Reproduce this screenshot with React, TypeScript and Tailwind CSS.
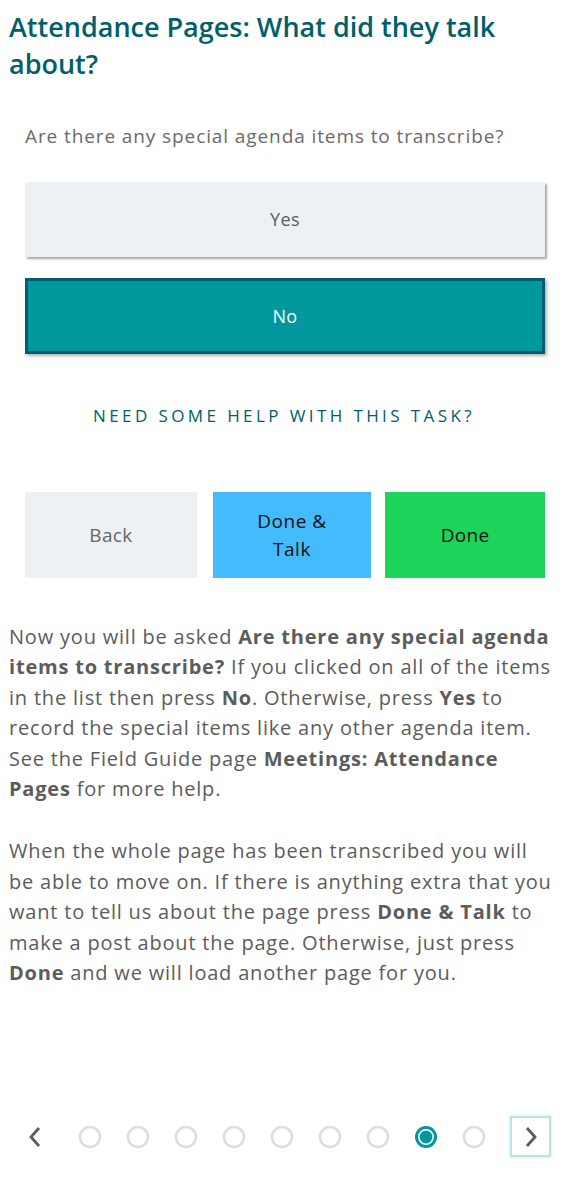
import React from "react";

const font = { fontFamily: '"Open Sans", "Noto Sans", Arial, sans-serif' };

function Dot({ active }: { active?: boolean }) {
  if (active) {
    return (
      <svg width="24" height="24" viewBox="0 0 24 24" className="shrink-0">
        <circle cx="12" cy="12" r="11" fill="#00979d" />
        <circle cx="12" cy="12" r="7.2" fill="#00979d" stroke="#ffffff" strokeWidth="1.6" />
      </svg>
    );
  }
  return (
    <svg width="24" height="24" viewBox="0 0 24 24" className="shrink-0">
      <circle cx="12" cy="12" r="10" fill="none" stroke="#dedede" strokeWidth="2.6" />
    </svg>
  );
}

export default function App() {
  return (
    <div
      className="flex min-h-[1178px] w-[568px] flex-col bg-white text-[#5c5c5c]"
      style={font}
    >
      <h1 className="px-[9px] pt-[8px] text-[27px] font-semibold leading-[37px] tracking-[0px] text-[#005f6b]">
        Attendance Pages: What did they talk about?
      </h1>

      <p className="mt-[42px] px-[25px] text-[19px] leading-[24px] tracking-[0.9px] text-[#6a6a6a]">
        Are there any special agenda items to transcribe?
      </p>

      <div className="mt-[34px] flex flex-col gap-[21px] px-[25px]">
        <button className="h-[75px] w-[520px] bg-[#eef1f4] text-[18px] tracking-[0.4px] text-[#5c5c5c] shadow-[2px_2px_2px_rgba(0,0,0,0.35)]">
          Yes
        </button>
        <button className="h-[76px] w-[520px] border-[3px] border-[#005f6b] bg-[#00979d] text-[18px] tracking-[0.4px] text-white shadow-[2px_2px_3px_rgba(0,0,0,0.3)]">
          No
        </button>
      </div>

      <div className="mt-[50px] text-center text-[17px] uppercase leading-[24px] tracking-[3.4px] text-[#005f6b]">
        Need some help with this task?
      </div>

      <div className="mt-[64px] flex px-[25px]">
        <button className="h-[86px] w-[172px] shrink-0 bg-[#eef1f4] text-[19px] tracking-[0.4px] text-[#666666]">
          Back
        </button>
        <button className="ml-[16px] h-[86px] w-[158px] shrink-0 bg-[#43bbfd] px-4 text-[19px] leading-[28px] tracking-[0.5px] text-[#111111]">
          Done &amp;
          <br />
          Talk
        </button>
        <button className="ml-[14px] h-[86px] w-[160px] shrink-0 bg-[#1ed359] text-[19px] tracking-[0.3px] text-[#111111]">
          Done
        </button>
      </div>

      <div className="mt-[44px] pl-[9px] text-[20px] leading-[30.4px] tracking-[0.8px] text-[#5c5c5c]">
        <p>
          Now you will be asked <b className="font-bold">Are there any special agenda</b>
          <br />
          <b className="font-bold">items to transcribe?</b> If you clicked on all of the items
          <br />
          in the list then press <b className="font-bold">No</b>. Otherwise, press <b className="font-bold">Yes</b> to
          <br />
          record the special items like any other agenda item.
          <br />
          See the Field Guide page <b className="font-bold">Meetings: Attendance</b>
          <br />
          <b className="font-bold">Pages</b> for more help.
        </p>
        <p className="mt-[32px]">
          When the whole page has been transcribed you will
          <br />
          be able to move on. If there is anything extra that you
          <br />
          want to tell us about the page press <b className="font-bold">Done &amp; Talk</b> to
          <br />
          make a post about the page. Otherwise, just press
          <br />
          <b className="font-bold">Done</b> and we will load another page for you.
        </p>
      </div>

      <div className="mt-auto mb-[21px] flex items-center pl-[15px]">
        <button className="flex h-[40px] w-[40px] items-center justify-center">
          <svg width="16" height="22" viewBox="0 0 16 22">
            <path d="M12 2 L4 11 L12 20" fill="none" stroke="#5c5c5c" strokeWidth="2.8" />
          </svg>
        </button>
        <div className="ml-[23px] flex items-center gap-[24px]">
          <Dot />
          <Dot />
          <Dot />
          <Dot />
          <Dot />
          <Dot />
          <Dot />
          <Dot active />
          <Dot />
        </div>
        <button className="ml-[24px] flex h-[41px] w-[41px] items-center justify-center border-2 border-[#b9e4e6] bg-white shadow-[0_0_3px_#b9e4e6]">
          <svg width="16" height="22" viewBox="0 0 16 22">
            <path d="M4 2 L12 11 L4 20" fill="none" stroke="#5c5c5c" strokeWidth="2.8" />
          </svg>
        </button>
      </div>
    </div>
  );
}
